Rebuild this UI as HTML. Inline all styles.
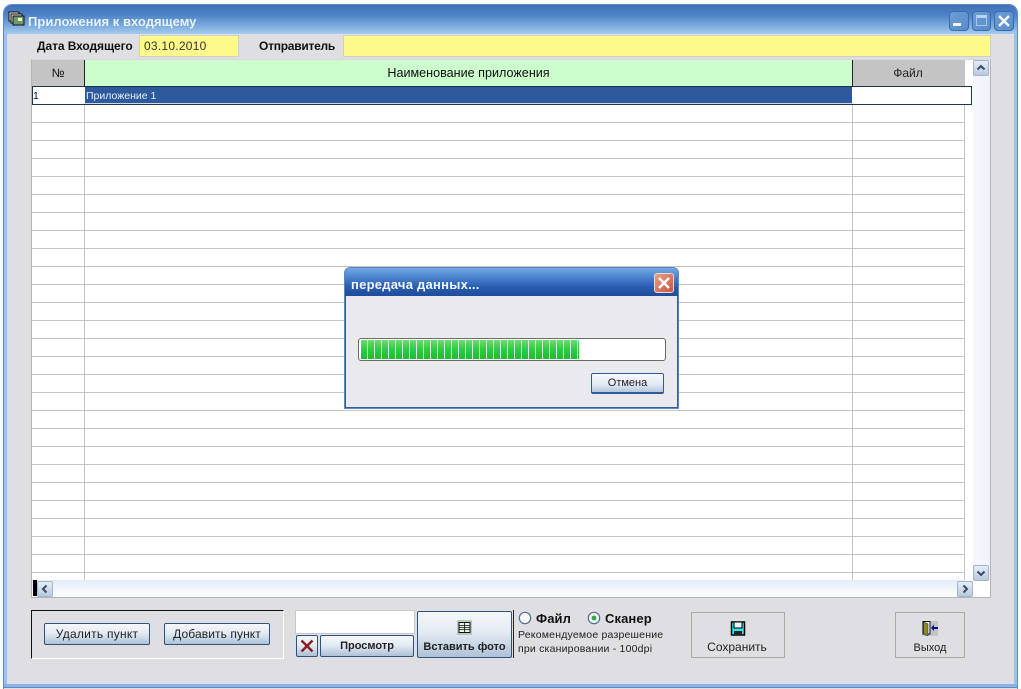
<!DOCTYPE html>
<html lang="ru"><head><meta charset="utf-8"><title>Приложения к входящему</title>
<style>
html,body{margin:0;padding:0;background:#fff;}
#p{position:relative;width:1021px;height:689px;overflow:hidden;background:#fff;font-family:"Liberation Sans",sans-serif;color:#111;}
#p div,#p svg{position:absolute;box-sizing:border-box;}
.t{white-space:nowrap;}
.b{font-weight:bold;}
.hl{left:32px;width:932px;height:1px;background:#c4c4c4;}
.btn{border:1px solid #2f5378;border-radius:2px;background:linear-gradient(#f4f7fb 0%,#e3ebf4 45%,#aec1d6 100%);text-align:center;color:#222;}
.sb{border:1px solid #a3b4cb;border-radius:2px;background:linear-gradient(#e6edf6,#b9c9dd);}
</style></head><body><div id="p">
<!-- window -->
<div style="left:3px;top:4px;width:1015px;height:685px;border-radius:9px 9px 0 0;background:#dfdfe3;border:1px solid #5f8cc6;border-bottom:none;"></div>
<div style="left:4px;top:5px;width:1013px;height:29px;border-radius:8px 8px 0 0;background:linear-gradient(#3d70b8 0%,#4f83c7 35%,#79a9dd 70%,#a7cbed 100%);"></div>
<div style="left:4px;top:33px;width:3px;height:653px;background:#9cc2ea;"></div>
<div style="left:1014px;top:33px;width:3px;height:653px;background:#9cc2ea;"></div>
<div style="left:4px;top:684px;width:1013px;height:4px;background:#8ab4e3;border-bottom:1px solid #5f8cc6;"></div>

<svg style="left:8px;top:11px;" width="17" height="16" viewBox="0 0 17 16"><rect x="1" y="1" width="10" height="9" fill="#e8e8e0" stroke="#111"/><rect x="3" y="3" width="11" height="9" fill="#dfe6d0" stroke="#111"/><rect x="5" y="5" width="11" height="9" fill="#6f9a6a" stroke="#111"/><rect x="10" y="7" width="4" height="3" fill="#eef2c8"/></svg>
<div class="t b" style="left:28px;top:14px;font-size:13px;letter-spacing:.03px;color:#e8f2fb;line-height:15px;">Приложения к входящему</div>

<!-- caption buttons -->
<div style="left:949px;top:11px;width:20px;height:20px;border:1px solid #3a6cab;border-radius:4px;background:linear-gradient(135deg,#6d9cd6,#5a8cca);"></div>
<div style="left:953px;top:23px;width:8px;height:3px;background:#f2f6fb;"></div>
<div style="left:972px;top:11px;width:19px;height:20px;border:1px solid #3a6cab;border-radius:4px;background:linear-gradient(135deg,#6d9cd6,#5a8cca);"></div>
<div style="left:976px;top:15px;width:11px;height:11px;border:1px solid #a9c8ea;border-top:3px solid #b9d4ef;"></div>
<div style="left:994px;top:11px;width:20px;height:20px;border:1px solid #3a6cab;border-radius:4px;background:linear-gradient(135deg,#6d9cd6,#5a8cca);"></div>
<svg style="left:997px;top:14px;" width="14" height="14" viewBox="0 0 14 14"><path d="M2 2L12 12M12 2L2 12" stroke="#f4f8fc" stroke-width="2.4"/></svg>

<!-- top fields -->
<div class="t b" style="left:37px;top:39px;font-size:12px;line-height:14px;letter-spacing:-.08px;">Дата Входящего</div>
<div style="left:139px;top:35px;width:100px;height:22px;background:#fdf98a;border:1px solid #cfcfc4;"></div>
<div class="t" style="left:144px;top:39px;font-size:12px;line-height:14px;letter-spacing:.25px;color:#333;">03.10.2010</div>
<div class="t b" style="left:259px;top:39px;font-size:12px;line-height:14px;letter-spacing:-.25px;">Отправитель</div>
<div style="left:343px;top:35px;width:648px;height:22px;background:#fdf98a;border:1px solid #cfcfc4;"></div>

<!-- grid -->
<div style="left:31px;top:59px;width:960px;height:539px;background:#fff;border:1px solid #b4b4b4;border-top:1px solid #d8d8d8;"></div>
<div style="left:32px;top:60px;width:52px;height:26px;background:#c4c4c4;"></div>
<div class="t" style="left:32px;top:66px;width:52px;text-align:center;font-size:12px;line-height:14px;">№</div>
<div style="left:84px;top:60px;width:769px;height:26px;background:#ccfdcc;border-left:1px solid #222;"></div>
<div class="t" style="left:84px;top:66px;width:769px;text-align:center;font-size:12.6px;line-height:14px;">Наименование приложения</div>
<div style="left:852px;top:60px;width:112px;height:26px;background:#c4c4c4;border-left:1px solid #222;"></div>
<div class="t" style="left:852px;top:66px;width:112px;text-align:center;font-size:12px;line-height:14px;color:#222;">Файл</div>

<!-- lines -->
<div class="hl" style="top:122px"></div><div class="hl" style="top:140px"></div><div class="hl" style="top:158px"></div><div class="hl" style="top:176px"></div><div class="hl" style="top:194px"></div><div class="hl" style="top:212px"></div><div class="hl" style="top:230px"></div><div class="hl" style="top:248px"></div><div class="hl" style="top:266px"></div><div class="hl" style="top:284px"></div><div class="hl" style="top:302px"></div><div class="hl" style="top:320px"></div><div class="hl" style="top:338px"></div><div class="hl" style="top:356px"></div><div class="hl" style="top:374px"></div><div class="hl" style="top:392px"></div><div class="hl" style="top:410px"></div><div class="hl" style="top:428px"></div><div class="hl" style="top:446px"></div><div class="hl" style="top:464px"></div><div class="hl" style="top:482px"></div><div class="hl" style="top:500px"></div><div class="hl" style="top:518px"></div><div class="hl" style="top:536px"></div><div class="hl" style="top:554px"></div><div class="hl" style="top:572px"></div>
<div style="left:84px;top:105px;width:1px;height:475px;background:#c4c4c4;"></div>
<div style="left:852px;top:105px;width:1px;height:475px;background:#c4c4c4;"></div>
<div style="left:964px;top:60px;width:1px;height:520px;background:#c4c4c4;"></div>

<!-- selected row -->
<div style="left:32px;top:86px;width:940px;height:19px;border:1px solid #1f3350;background:#fff;"></div>
<div style="left:85px;top:87px;width:767px;height:17px;background:#2c5a9c;border-bottom:1px solid #cfd8e4;"></div>
<div class="t" style="left:33px;top:90px;font-size:10.500px;line-height:12px;">1</div>
<div class="t" style="left:86px;top:90px;font-size:10.500px;line-height:12px;color:#e8eef8;">Приложение 1</div>

<!-- scrollbars -->
<div style="left:973px;top:60px;width:17px;height:521px;background:linear-gradient(90deg,#f6f8fd,#eef2fa);"></div>
<div style="left:32px;top:580px;width:932px;height:17px;background:linear-gradient(#e3edf8,#fdfdfe);"></div>
<div style="left:33px;top:580px;width:4px;height:16px;background:#000;"></div>
<div class="sb" style="left:37px;top:581px;width:16px;height:16px;"></div>
<svg style="left:40px;top:584px;" width="10" height="10" viewBox="0 0 10 10"><path d="M6.500 1.500L3 5L6.500 8.500" fill="none" stroke="#3b4a63" stroke-width="2"/></svg>
<div class="sb" style="left:957px;top:581px;width:16px;height:16px;"></div>
<svg style="left:960px;top:584px;" width="10" height="10" viewBox="0 0 10 10"><path d="M3.500 1.500L7 5L3.500 8.500" fill="none" stroke="#3b4a63" stroke-width="2"/></svg>
<div class="sb" style="left:973px;top:60px;width:16px;height:16px;"></div>
<svg style="left:976px;top:63px;" width="10" height="10" viewBox="0 0 10 10"><path d="M1.500 6.500L5 3L8.500 6.500" fill="none" stroke="#3b4a63" stroke-width="2"/></svg>
<div class="sb" style="left:973px;top:565px;width:16px;height:16px;"></div>
<svg style="left:976px;top:568px;" width="10" height="10" viewBox="0 0 10 10"><path d="M1.500 3.500L5 7L8.500 3.500" fill="none" stroke="#3b4a63" stroke-width="2"/></svg>

<!-- dialog -->
<div style="left:344px;top:267px;width:335px;height:142px;border:1px solid #5f86bc;border-radius:6px 6px 0 0;background:#eae9ee;box-shadow:inset 0 0 0 1px #2f5ea6;"></div>
<div style="left:345px;top:268px;width:333px;height:28px;border-radius:5px 5px 0 0;background:linear-gradient(#72a7e6 0%,#4f86d0 30%,#2c5fb0 65%,#1f4b9b 100%);"></div>
<div class="t b" style="left:351px;top:277px;font-size:13px;line-height:15px;letter-spacing:.25px;color:#f2f6fc;">передача данных...</div>
<div style="left:654px;top:273px;width:20px;height:20px;border:1px solid #f0d8d0;border-radius:3px;background:linear-gradient(135deg,#e6a08c,#c9553a);"></div>
<svg style="left:657px;top:276px;" width="14" height="14" viewBox="0 0 14 14"><path d="M2 2L12 12M12 2L2 12" stroke="#fff" stroke-width="2.400"/></svg>
<div style="left:358px;top:338px;width:308px;height:23px;border:1px solid #6b6b6b;border-radius:3px;background:#fff;"></div>
<div style="left:361px;top:340px;width:218px;height:19px;background:repeating-linear-gradient(90deg,rgba(0,0,0,0) 0,rgba(0,0,0,0) 6px,#d4ecd4 6px,#d4ecd4 7px),linear-gradient(#6fdc6f,#2ccb45 50%,#1fbb35);"></div>
<div class="btn t" style="left:591px;top:373px;width:73px;height:21px;border:1px solid #2f5a9c;border-bottom:2px solid #2f5a9c;font-size:11px;line-height:19px;background:linear-gradient(#f7f9fc,#e3ebf4 55%,#b6c8dc);">Отмена</div>

<!-- bottom left group -->
<div style="left:31px;top:610px;width:253px;height:49px;border-top:1px solid #111;border-left:1px solid #111;border-right:1px solid #fff;border-bottom:1px solid #fff;"></div>
<div class="btn t" style="left:44px;top:623px;width:106px;height:22px;font-size:12px;line-height:20px;letter-spacing:.25px;">Удалить пункт</div>
<div class="btn t" style="left:164px;top:623px;width:106px;height:22px;font-size:12px;line-height:20px;letter-spacing:.1px;">Добавить пункт</div>

<!-- photo group -->
<div style="left:295px;top:610px;width:120px;height:24px;background:#fff;border:1px solid #c8c8c8;"></div>
<div class="btn" style="left:296px;top:635px;width:22px;height:22px;"></div>
<svg style="left:300px;top:639px;" width="14" height="14" viewBox="0 0 14 14"><path d="M1.500 1.500L12.500 12.500M12.500 1.500L1.500 12.500" stroke="#8c1d1d" stroke-width="2.400"/></svg>
<div class="btn t b" style="left:320px;top:635px;width:94px;height:22px;font-size:11px;line-height:20px;">Просмотр</div>
<div class="btn" style="left:417px;top:611px;width:95px;height:47px;"></div>
<svg style="left:457px;top:620px;" width="15" height="15" viewBox="0 0 15 15"><rect width="15" height="15" fill="#bcc8bc"/><rect x="2" y="2.500" width="11" height="10" fill="#e6f3e6" stroke="#111"/><path d="M2 5.500H13M2 7.500H13M2 9.500H13M7.500 2.500V12.500" stroke="#111" stroke-width=".8"/></svg>
<div class="t b" style="left:417px;top:641px;width:95px;text-align:center;font-size:11px;line-height:13px;color:#222;">Вставить фото</div>
<div style="left:513px;top:610px;width:1px;height:48px;background:#222;"></div>

<!-- radios -->
<svg style="left:518px;top:611px;" width="14" height="14" viewBox="0 0 14 14"><circle cx="7" cy="7" r="5.700" fill="#f8f8f8" stroke="#4f6f92" stroke-width="1.200"/></svg>
<div class="t b" style="left:536px;top:611px;font-size:13px;line-height:15px;letter-spacing:.1px;color:#111;">Файл</div>
<svg style="left:587px;top:611px;" width="14" height="14" viewBox="0 0 14 14"><circle cx="7" cy="7" r="5.700" fill="#f8f8f8" stroke="#4f6f92" stroke-width="1.200"/><circle cx="7" cy="7" r="2.500" fill="#38a84a"/></svg>
<div class="t b" style="left:605px;top:611px;font-size:13px;line-height:15px;letter-spacing:.1px;color:#111;">Сканер</div>
<div class="t" style="left:518px;top:629px;font-size:10.500px;line-height:13px;letter-spacing:.2px;color:#222;">Рекомендуемое разрешение</div>
<div class="t" style="left:518px;top:643px;font-size:10.500px;line-height:13px;letter-spacing:.2px;color:#222;">при сканировании - 100dpi</div>

<!-- save -->
<div style="left:691px;top:612px;width:94px;height:46px;border:1px solid #aaa;"></div>
<svg style="left:730px;top:621px;" width="16" height="15" viewBox="0 0 16 15"><rect x="1.500" y="1" width="13" height="13" fill="#2fe6ee" stroke="#000" stroke-width="1.500"/><rect x="4" y="1" width="8" height="6" fill="#e9f4f4" stroke="#000"/><rect x="4" y="10" width="8" height="4" fill="#222"/></svg>
<div class="t" style="left:690px;top:640px;width:94px;text-align:center;font-size:12px;line-height:14px;color:#222;">Сохранить</div>

<!-- exit -->
<div style="left:895px;top:612px;width:70px;height:46px;border:1px solid #aaa;"></div>
<svg style="left:922px;top:621px;" width="16" height="15" viewBox="0 0 16 15"><rect width="16" height="15" fill="#c4c4c4"/><path d="M1 0.500H8V13H1Z" fill="#fff" stroke="#111"/><path d="M1.500 1L6 3V15L1.500 13Z" fill="#8a8a1e" stroke="#333" stroke-width=".6"/><path d="M16 6H12V3.500L9 7L12 10V8H16Z" fill="#101080"/></svg>
<div class="t" style="left:895px;top:642px;width:70px;text-align:center;font-size:11px;line-height:13px;color:#222;">Выход</div>
</div></body></html>
